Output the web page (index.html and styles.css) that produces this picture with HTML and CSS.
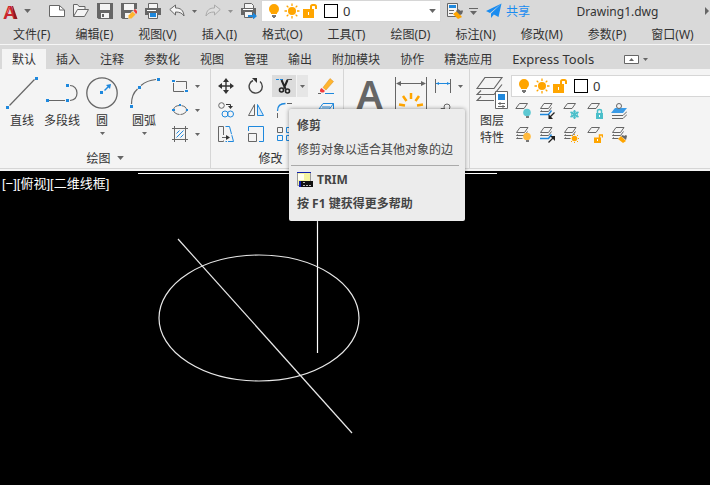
FILE: index.html
```
<!DOCTYPE html>
<html lang="zh-CN">
<head>
  <meta charset="UTF-8" />
  <meta name="viewport" content="width=device-width, initial-scale=1.0"/>
  <title>Drawing1.dwg</title>
  <link rel="stylesheet" href="styles.css">
</head>
<body>
  <!-- shared icons -->
  <svg class="defs" aria-hidden="true">
    <symbol id="bulb" viewBox="0 0 16 16">
      <path fill="#ffa500" d="M8 1a5 5 0 0 0-5 5c0 2 1 3 2 4.200V11h6v-.8C12 9 13 8 13 6a5 5 0 0 0-5-5z"/>
      <path fill="#777" d="M6 12h4v2H9v1H7v-1H6z"/>
    </symbol>
    <symbol id="sun" viewBox="0 0 16 16">
      <circle cx="8" cy="8" r="4" fill="#ffa500"/>
      <path stroke="#ffa500" stroke-width="1.300" d="M8 .5v2.500M8 13v2.500M.5 8H3M13 8h2.500M2.700 2.700l1.700 1.700M11.600 11.600l1.700 1.700M2.700 13.300l1.700-1.700M11.600 4.400l1.700-1.700"/>
    </symbol>
    <symbol id="lock" viewBox="0 0 16 16">
      <path fill="none" stroke="#ffa500" stroke-width="2" d="M9 7V3.500C9 2.500 9.500 2 10.500 2h2c1 0 1.500.5 1.500 1.500V6"/>
      <path fill="#ffa500" d="M1 6h11v9H1z"/>
      <path fill="#fff" d="M6 9h1v3H6z"/>
    </symbol>
    <symbol id="layer" viewBox="0 0 16 16">
      <path fill="#f4f4f4" stroke="#666" d="M.8 5.500L4.500.5h8L9 5.500z"/>
    </symbol>
    <symbol id="layers" viewBox="0 0 16 16">
      <path fill="none" stroke="#666" d="M1.500 5.500L5 .5h8L9.500 5.500zM3 7.500l-1.500 1h8l3-4M3 10.500l-1.500 1h6"/>
    </symbol>
    <symbol id="layers-blue" viewBox="0 0 16 16">
      <path fill="none" stroke="#1e88dd" stroke-width="1.500" d="M1 11.500h8.500l3-4"/>
      <path fill="none" stroke="#666" d="M1.500 5.500L5 .5h8L9.500 5.500zM3 7.500l-1.500 1h8l3-4"/>
    </symbol>
    <symbol id="caret" viewBox="0 0 5 3">
      <path fill="#666" d="M0 0h5L2.500 3z"/>
    </symbol>
  </svg>

  <header class="titlebar">
    <button class="app-btn" aria-label="AutoCAD">
      <svg class="logo" viewBox="0 0 15 18">
        <text x="0" y="17">A</text>
        <path fill="#8e1a22" d="M9 4h1l4.500 13h-3z"/>
        <path fill="#ef6a6a" d="M6 5h1l-2.500 6H3.500z"/>
      </svg>
      <svg class="caret-lg"><use href="#caret"/></svg>
    </button>
    <div class="quick">
      <button aria-label="新建"><svg class="icon" viewBox="0 0 16 16"><path fill="#fff" stroke="#666" d="M.5 2.500h10l5 4.500v6.500H.5z"/><path fill="none" stroke="#666" d="M10.500 2.500V7h5"/></svg></button>
      <button aria-label="打开"><svg class="icon" viewBox="0 0 16 16"><path fill="#f4f4f4" stroke="#666" d="M.5 13.500v-12h4l1.500 2h6v3M.5 13.500l4-7h11l-4 7z"/></svg></button>
      <button aria-label="保存"><svg class="icon" viewBox="0 0 16 16"><path fill="#666" d="M0 0h16v16H1.500L0 14.500z"/><path fill="#f4f4f4" d="M3 1h10v6H3zM4 10h8v5H4z"/><path fill="#666" d="M5 11h2v3H5z"/></svg></button>
      <button aria-label="另存为"><svg class="icon" viewBox="0 0 16 16"><path fill="#666" d="M0 0h16v16H1.500L0 14.500z"/><path fill="#f4f4f4" d="M3 1h10v6H3zM4 10h8v5H4z"/><path fill="#d9d9d9" d="M7 16l3-7 4-3h2v10z"/><path fill="#ffb52e" d="M7.500 12.500l4-4 3 3-4 4H7.500z"/><path fill="#f23c3c" d="M12.500 7.500L14 6l2 2v2l-1 1z"/></svg></button>
      <button aria-label="打印"><svg class="icon" viewBox="0 0 16 16"><path fill="#f4f4f4" stroke="#666" d="M3.500 5.500v-5h9v5"/><path fill="#666" d="M0 5h16v7h-3v-2H3v2H0z"/><path fill="#f4f4f4" stroke="#666" d="M3.500 9.500h9v6h-9z"/><path fill="#1e88dd" d="M5 10h6v4H5z"/><path fill="#fff" d="M2 7h9v1H2z"/></svg></button>
      <button aria-label="放弃"><svg class="icon" viewBox="0 0 16 16"><path fill="#f4f4f4" stroke="#666" d="M.8 6.500L6.500 2v3c5 0 8 2 8.500 8-2-3-4-4-8.500-4v3z"/></svg></button>
      <button class="drop" aria-label="放弃列表"><svg class="caret"><use href="#caret"/></svg></button>
      <button aria-label="重做" disabled><svg class="icon" viewBox="0 0 16 16"><path fill="#dedede" stroke="#aaa" d="M15.200 6.500L9.500 2v3c-5 0-8 2-8.500 8 2-3 4-4 8.500-4v3z"/></svg></button>
      <button class="drop faded" aria-label="重做列表"><svg class="caret"><use href="#caret"/></svg></button>
      <button aria-label="批处理打印"><svg class="icon" viewBox="0 0 16 16"><path fill="#f4f4f4" stroke="#666" d="M3.500 5.500v-5h7l2 2v3"/><path fill="#666" d="M0 5h15v7h-3v-2H3v2H0z"/><path fill="#f4f4f4" stroke="#666" d="M3.500 8.500h8v6h-8z"/><path fill="#fff" d="M2 6h10v1H2z"/><path fill="#1e88dd" d="M7 12h5V9.500l4 3.500-4 3.500V14H7z"/></svg></button>
    </div>
    <div class="combo quick-layer">
      <svg class="icon"><use href="#bulb"/></svg>
      <svg class="icon"><use href="#sun"/></svg>
      <svg class="icon"><use href="#lock"/></svg>
      <span class="swatch"></span>
      <select aria-label="当前图层"><option>0</option></select>
      <svg class="caret-lg"><use href="#caret"/></svg>
    </div>
    <button class="match" aria-label="特性匹配"><svg class="icon" viewBox="0 0 16 16"><path fill="#f4f4f4" stroke="#666" d="M.5.5h10v13H.5z"/><path fill="#1e88dd" d="M2 2h7v3H2z"/><path stroke="#666" d="M2 7.500h5M2 10.500h4"/><path fill="#ffa500" d="M6 11l4-3 5 6-4 2z"/><path fill="#666" d="M9 8l2-2 3 2 1-1 1 1-1 3-2 1z"/></svg></button>
    <button class="custom" aria-label="自定义"><svg viewBox="0 0 9 7"><path fill="#666" d="M0 0h9v1H0zM1 3h7L4.500 7z"/></svg></button>
    <button class="share"><svg class="icon" viewBox="0 0 16 16"><path fill="#1a8cf0" d="M15.500.5L0 8l4 2zM15.500.5L5 10.500V15l2.500-3zM15.500.5L7 11l5.500 3z"/></svg>共享</button>
    <div class="doc-name">Drawing1.dwg</div>
    <button class="more" aria-label="更多"><svg viewBox="0 0 4 8"><path fill="#666" d="M0 0l4 4-4 4z"/></svg></button>
  </header>

  <nav class="menubar">
    <a href="#">文件(F)</a>
    <a href="#">编辑(E)</a>
    <a href="#">视图(V)</a>
    <a href="#">插入(I)</a>
    <a href="#">格式(O)</a>
    <a href="#">工具(T)</a>
    <a href="#">绘图(D)</a>
    <a href="#">标注(N)</a>
    <a href="#">修改(M)</a>
    <a href="#">参数(P)</a>
    <a href="#">窗口(W)</a>
  </nav>

  <nav class="tabs">
    <a class="active" href="#">默认</a>
    <a href="#">插入</a>
    <a href="#">注释</a>
    <a href="#">参数化</a>
    <a href="#">视图</a>
    <a href="#">管理</a>
    <a href="#">输出</a>
    <a href="#">附加模块</a>
    <a href="#">协作</a>
    <a href="#">精选应用</a>
    <a class="latin" href="#">Express Tools</a>
    <button class="minimize" aria-label="最小化功能区">
      <svg class="mini-box" viewBox="0 0 15 9"><path fill="#fff" stroke="#666" d="M.5.5h14v8H.5z"/><path fill="#666" d="M5 6h5L7.500 3z"/></svg>
      <svg class="caret"><use href="#caret"/></svg>
    </button>
  </nav>

  <section class="ribbon">
    <div class="panel">
      <div class="panel-body">
        <button class="big">
          <svg viewBox="0 0 32 32"><path stroke="#666" stroke-width="1.200" d="M3.500 28.500l25-26"/><path fill="#1e88dd" d="M0 29h3v3H0zM29 0h3v3h-3z"/></svg>
          <span>直线</span>
        </button>
        <button class="big wide">
          <svg viewBox="0 0 32 32"><path fill="none" stroke="#666" stroke-width="1.200" d="M3 23.500h16M24 23.500c4-.5 7-3 7-7.500s-3-7.500-7-7.500"/><path fill="#1e88dd" d="M0 22h3v3H0zM20 22h3v3h-3zM20 7h3v3h-3z"/></svg>
          <span>多段线</span>
        </button>
        <button class="big">
          <svg viewBox="0 0 32 32"><circle cx="16" cy="16" r="15.200" fill="none" stroke="#666" stroke-width="1.300"/><path fill="#1e88dd" d="M14 14h3v3h-3zM25 7l-1 5-4-4z"/><path stroke="#1e88dd" stroke-width="1.400" d="M18.500 13.500l5-5"/></svg>
          <span>圆</span>
          <svg class="caret"><use href="#caret"/></svg>
        </button>
        <button class="big arc">
          <svg viewBox="0 0 32 32"><path fill="none" stroke="#666" stroke-width="1.200" d="M3.500 27c0-6 2-11.500 6-15M13 8.500c4-3.500 9-5.500 15-6"/><path fill="#1e88dd" d="M2 28h3v3H2zM10 9h3v3h-3zM29 1h3v3h-3z"/></svg>
          <span>圆弧</span>
          <svg class="caret"><use href="#caret"/></svg>
        </button>
        <div class="small-col">
          <button aria-label="矩形"><svg class="icon" viewBox="0 0 16 16"><path fill="none" stroke="#666" d="M4 3.500h10.500V11M1.500 5v8.500H12"/><path fill="#1e88dd" d="M0 2h3v2H0zM13 12h3v2h-3z"/></svg><svg class="caret"><use href="#caret"/></svg></button>
          <button aria-label="椭圆"><svg class="icon" viewBox="0 0 16 16"><ellipse cx="8" cy="8" rx="6.500" ry="4.500" fill="none" stroke="#666" stroke-dasharray="8 1"/><path fill="#1e88dd" d="M7 2h2v2H7zM0 7h3v2H0zM14 7h2v2h-2z"/></svg><svg class="caret"><use href="#caret"/></svg></button>
          <button aria-label="图案填充"><svg class="icon" viewBox="0 0 16 16"><path stroke="#1e88dd" d="M4.500 7.500l3-3M4.500 11.500l7-7M8.500 11.500l3-3"/><path fill="none" stroke="#666" d="M0 2.500h16M0 13.500h16M2.500 0v16M13.500 0v16"/></svg><svg class="caret"><use href="#caret"/></svg></button>
        </div>
      </div>
      <div class="panel-title">绘图<svg class="caret-lg"><use href="#caret"/></svg></div>
    </div>

    <div class="panel">
      <div class="modify-grid">
        <button aria-label="移动"><svg class="icon" viewBox="0 0 16 16"><path stroke="#333" stroke-width="1.400" d="M8 2v12M2 8h12"/><path fill="#333" d="M8 0l3 4H5zM8 16l3-4H5zM0 8l4-3v6zM16 8l-4-3v6z"/></svg></button>
        <button aria-label="旋转"><svg class="icon" viewBox="0 0 16 16"><path fill="none" stroke="#444" stroke-width="1.400" d="M5 2.500A6.600 6.600 0 1 0 12 3.500"/><path fill="#333" d="M4 0h5v5z"/></svg></button>
        <div class="split">
          <button class="trim" aria-label="修剪" aria-describedby="trim-tip"><svg class="icon" viewBox="0 0 16 16"><path stroke="#1e88dd" stroke-dasharray="3 1" d="M0 1.500h8"/><path stroke="#555" d="M11 1.500h5"/><path stroke="#222" stroke-width="2" d="M5.500 2l4 9M11.500 2L8 10"/><circle cx="5.500" cy="12" r="2" fill="none" stroke="#222" stroke-width="1.600"/><circle cx="11.500" cy="13" r="2" fill="none" stroke="#222" stroke-width="1.600"/></svg></button>
          <button class="trim-drop" aria-label="修剪列表"><svg class="caret"><use href="#caret"/></svg></button>
          <div class="tooltip" id="trim-tip" role="tooltip">
            <strong>修剪</strong>
            <p>修剪对象以适合其他对象的边</p>
            <hr>
            <strong class="command"><svg class="icon" viewBox="0 0 16 16"><path fill="#f4f4a0" stroke="#999" d="M.5.5h13v13H.5z"/><path fill="#fffff0" d="M1 2h6v6H1z"/><path fill="#1020b0" d="M0 0h14v1H0zM2 9h3v6H2z"/><path fill="#111" d="M4 9h12v6H4z"/><path stroke="#bbb" stroke-dasharray="2 1" d="M6 10.500h3M6 13.500h8"/></svg>TRIM</strong>
            <strong>按 F1 键获得更多帮助</strong>
          </div>
        </div>
        <button aria-label="删除"><svg class="icon" viewBox="0 0 16 16"><path fill="#ffb52e" stroke="#d98f20" stroke-width=".5" d="M5 9.500l7-9 3.500 3L8 12z"/><path fill="#f23c3c" d="M2 11.500L3.500 10l3.500 3-1.500 1.500h-2L2 13.500z"/><path stroke="#1e88dd" d="M7 15.500h9"/><path stroke="#666" d="M0 15.500h3"/></svg></button>

        <button aria-label="复制"><svg class="icon" viewBox="0 0 16 16"><g fill="none"><circle cx="3.500" cy="3.500" r="2.800" stroke="#666"/><circle cx="7" cy="12" r="3" stroke="#1e88dd"/><circle cx="12.500" cy="12" r="3" stroke="#1e88dd"/><path stroke="#333" d="M8 2.500h4.500V4"/></g><path fill="#333" d="M10 4h5l-2.500 3z"/></svg></button>
        <button aria-label="镜像"><svg class="icon" viewBox="0 0 16 16"><path fill="none" stroke="#666" d="M6.500 2.500v11h-6z"/><path fill="#d6eafa" stroke="#1e88dd" d="M9.500 2.500v11h6z"/></svg></button>
        <button class="left" aria-label="圆角"><svg class="icon" viewBox="0 0 16 16"><path fill="none" stroke="#1e88dd" stroke-width="1.300" d="M1.500 9c0-5 3-7.500 8-7.500"/><path stroke="#666" d="M1.500 11v5M11 1.500h5"/></svg></button>
        <button aria-label="分解"><svg class="icon" viewBox="0 0 16 16"><path fill="none" stroke="#1e88dd" d="M1 7L5 1.500h10.500L11.500 7zM4 5h8M15.500 1.500v6l-4 5M1 9.500h10v5H1z"/></svg></button>

        <button aria-label="拉伸"><svg class="icon" viewBox="0 0 16 16"><path fill="none" stroke="#666" d="M5.500 9V.5h-5v15h5v-1M4 11.500h5"/><path fill="#333" d="M8 9l4 2.500L8 14z"/><path fill="none" stroke="#1e88dd" d="M7.500.5h4l4 15h-8" stroke-dasharray="12 1"/></svg></button>
        <button aria-label="缩放"><svg class="icon" viewBox="0 0 16 16"><path fill="none" stroke="#1e88dd" d="M.5 5V.5h15v15H11"/><path fill="none" stroke="#666" d="M.5 7.500h8v8h-8z"/></svg></button>
        <button class="left" aria-label="阵列"><svg class="icon" viewBox="0 0 16 16"><g fill="none"><path stroke="#666" d="M1.500 1.500h5v5h-5z"/><path stroke="#1e88dd" d="M10.500 1.500h5v5h-5zM1.500 9.500h5v5h-5zM10.500 9.500h5v5h-5z"/></g></svg></button>
      </div>
      <div class="panel-title">修改<svg class="caret-lg"><use href="#caret"/></svg></div>
    </div>

    <div class="panel">
      <div class="panel-body">
        <button class="text-tool">A</button>
        <button class="big dim" aria-label="标注">
          <svg viewBox="0 0 32 32"><path fill="none" stroke="#666" d="M.5 0v32M31.500 0v32M2 6.500h28"/><path fill="#666" d="M1 6.500l5-2.500v5zM31 6.500L26 4v5z"/><path stroke="#ffa500" stroke-width="2.500" d="M16 16v6M8 19l3.500 5M24 19l-3.500 5M4 27.500l6 1M28 27.500l-6 1"/></svg>
        </button>
        <div class="small-col">
          <button aria-label="线性"><svg class="icon" viewBox="0 0 16 16"><path stroke="#666" d="M.5 1v14M15.500 1v14"/><path stroke="#1e88dd" d="M1 5.500h14"/><path fill="#1e88dd" d="M1 5.500L4 4v3zM15 5.500L12 4v3z"/></svg><svg class="caret"><use href="#caret"/></svg></button>
          <button aria-label="引线"><svg class="icon" viewBox="0 0 16 16"><circle cx="12" cy="5" r="3" fill="none" stroke="#666"/><path fill="none" stroke="#666" d="M9 6.500H6L3 14"/></svg></button>
        </div>
      </div>
      <div class="panel-title"></div>
    </div>

    <div class="panel layers">
      <div class="panel-body">
        <button class="big wide">
          <svg viewBox="0 0 32 32"><path fill="none" stroke="#666" stroke-width="1.200" d="M1 11.500L9 .5h17l-8 11zM5 13.500l-4 4h17l8-10M5 19.500l-4 4h17"/><path fill="#fff" stroke="#666" d="M19.500 14.500h12v17h-12z"/><path fill="#1e88dd" d="M22 17h7v6h-7z"/><path stroke="#666" d="M22 26.500h7M22 29.500h7M24 25v3M27 28v3"/></svg>
          <span>图层<br>特性</span>
        </button>
        <div class="layer-tools">
          <div class="combo">
            <svg class="icon"><use href="#bulb"/></svg>
            <svg class="icon"><use href="#sun"/></svg>
            <svg class="icon"><use href="#lock"/></svg>
            <span class="swatch"></span>
            <select aria-label="图层"><option>0</option></select>
          </div>
          <div class="icon-row">
            <button aria-label="关"><svg class="icon" viewBox="0 0 16 16"><use href="#layer"/><circle cx="12" cy="9.500" r="3.800" fill="#5cc8d2"/><path fill="#777" d="M11 13h3v2h-3z"/></svg></button>
            <button aria-label="隔离"><svg class="icon" viewBox="0 0 16 16"><use href="#layers-blue"/><path stroke="#222" stroke-width="1.300" d="M15.500 9.500L11 14"/><path fill="#222" d="M9.500 16v-5l4.500 5z"/></svg></button>
            <button aria-label="冻结"><svg class="icon" viewBox="0 0 16 16"><use href="#layer"/><path stroke="#4bbfca" stroke-width="1.600" d="M11.500 7v9M7.500 9l8 5M7.500 14l8-5"/><circle cx="11.500" cy="11.500" r="3" fill="none" stroke="#4bbfca"/></svg></button>
            <button aria-label="锁定"><svg class="icon" viewBox="0 0 16 16"><use href="#layer"/><path fill="none" stroke="#4bbfca" stroke-width="1.500" d="M10.500 10V8c0-2 4-2 4 0v2"/><path fill="#4bbfca" d="M9 10h7v6H9z"/><path fill="#fff" d="M12 12h1v2h-1z"/></svg></button>
            <button aria-label="置为当前"><svg class="icon" viewBox="0 0 16 16"><path fill="#3a9be6" d="M0 10l4-5h12l-4 5z"/><path fill="none" stroke="#666" d="M1 12.500h11l4-4M1 15.500h11l4-4"/><circle cx="8" cy="3" r="2.500" fill="#f4f4f4" stroke="#666"/></svg></button>
          </div>
          <div class="icon-row">
            <button aria-label="打开所有图层"><svg class="icon" viewBox="0 0 16 16"><use href="#layers"/><circle cx="12" cy="9.500" r="3.800" fill="#ffb93b"/><path fill="#777" d="M11 13h3v2h-3z"/></svg></button>
            <button aria-label="取消隔离"><svg class="icon" viewBox="0 0 16 16"><use href="#layers-blue"/><path stroke="#222" stroke-width="1.300" d="M9.500 15.500l5-5"/><path fill="#222" d="M16 9v5l-5-5z"/></svg></button>
            <button aria-label="解冻"><svg class="icon" viewBox="0 0 16 16"><use href="#layers"/><circle cx="11.500" cy="11.500" r="2.800" fill="#ffa500"/><path stroke="#ffa500" d="M11.500 7v1M11.500 15v1M7 11.500h1M15 11.500h1M8 8l1 1M14 14l1 1M8 15l1-1M14 9l1-1"/></svg></button>
            <button aria-label="解锁"><svg class="icon" viewBox="0 0 16 16"><use href="#layer"/><path fill="none" stroke="#ffa500" stroke-width="1.500" d="M12.500 11V8h3v2.500"/><path fill="#ffa500" d="M7 10.500h7V16H7z"/><path fill="#fff" d="M10 12h1v2h-1z"/></svg></button>
            <button aria-label="匹配图层"><svg class="icon" viewBox="0 0 16 16"><use href="#layers"/><path fill="#ffa500" d="M7 12l3-3 5 5-3 2z"/><path fill="#666" d="M10 9l2-1 1 1 2-1 1 1-1 4z"/></svg></button>
          </div>
        </div>
      </div>
      <div class="panel-title"></div>
    </div>
  </section>

  <main class="viewport">
    <div class="view-label">[−][俯视][二维线框]</div>
    <svg class="drawing" fill="none" stroke="#e8e8e8" stroke-width="1.200">
      <path stroke="#fff" d="M138 2.500h359M317.500 2v180"/>
      <ellipse cx="259" cy="147" rx="100" ry="63"/>
      <path d="M178 68l174 194"/>
    </svg>
  </main>
</body>
</html>
```

FILE: styles.css
```
:root {
  --bar: #d9d9d9;
  --ribbon: #f4f4f4;
  --line: #d6d6d6;
  --text: #333;
}
* {
  box-sizing: border-box;
}
body {
  margin: 0;
  min-height: 100vh;
  display: flex;
  flex-direction: column;
  font-family: "Noto Sans", "Noto Sans CJK SC", sans-serif;
  font-size: 12px;
  color: var(--text);
  background: #000;
  overflow: hidden;
}
button, select {
  font: inherit;
  color: inherit;
  background: none;
  border: none;
  padding: 0;
  margin: 0;
}
button {
  display: flex;
  align-items: center;
  justify-content: center;
  cursor: pointer;
}
a {
  color: inherit;
  text-decoration: none;
}
svg {
  display: block;
  flex: none;
}
.defs {
  position: absolute;
  width: 0;
  height: 0;
}
.icon {
  width: 16px;
  height: 16px;
}
.caret {
  width: 5px;
  height: 3px;
}
.caret-lg {
  width: 7px;
  height: 4px;
}

/* title bar */
.titlebar {
  display: flex;
  align-items: center;
  height: 22px;
  background: var(--bar);
}
.app-btn {
  gap: 6px;
  margin-left: 3px;
}
.logo {
  width: 15px;
  height: 18px;
  overflow: visible;
}
.logo text {
  font-family: "Liberation Sans", sans-serif;
  font-size: 19px;
  font-weight: bold;
  fill: #c9252d;
}
.quick {
  display: flex;
  margin-left: 18px;
  gap: 8px;
}
.quick .drop {
  width: 5px;
  margin-left: -1px;
}
.faded {
  opacity: 0.6;
}
.combo {
  display: flex;
  align-items: center;
  gap: 2px;
  height: 22px;
  padding: 0 4px;
  background: #fff;
  border: 1px solid var(--line);
}
.swatch {
  width: 14px;
  height: 14px;
  margin: 0 3px 0 4px;
  border: 1px solid #000;
  flex: none;
}
.combo select {
  flex: 1;
  min-width: 0;
  appearance: none;
  font-size: 13px;
}
.quick-layer {
  width: 180px;
  margin-left: 4px;
  flex: none;
}
.match {
  margin-left: 6px;
}
.custom {
  margin-left: 6px;
}
.custom svg {
  width: 9px;
  height: 7px;
}
.share {
  margin-left: 8px;
  gap: 4px;
  color: #1a8cf0;
}
.doc-name {
  flex: 1;
  text-align: center;
  white-space: nowrap;
}
.more svg {
  width: 4px;
  height: 8px;
}
.more {
  margin-right: 1px;
}

/* menus and tabs */
.menubar {
  display: flex;
  gap: 25px;
  height: 23px;
  padding-left: 13px;
  line-height: 25px;
  white-space: nowrap;
  background: var(--bar);
  border-bottom: 1px solid #f6f6f6;
}
.tabs {
  display: flex;
  height: 24px;
  padding: 4px 0 0 2px;
  line-height: 21px;
  white-space: nowrap;
  background: var(--bar);
}
.tabs a {
  padding: 0 10px;
}
.tabs .active {
  background: var(--ribbon);
}
.tabs .latin {
  font-size: 13px;
}
.minimize {
  gap: 4px;
  margin-left: 20px;
}
.mini-box {
  width: 15px;
  height: 9px;
}

/* ribbon */
.ribbon {
  display: flex;
  height: 102px;
  padding-bottom: 2px;
  background: var(--ribbon);
}
.panel {
  display: flex;
  flex-direction: column;
  flex: none;
  padding-top: 5px;
  border-right: 1px solid var(--line);
  border-bottom: 1px solid var(--line);
}
.panel-body {
  display: flex;
  height: 72px;
}
.panel-title {
  display: flex;
  flex: 1;
  align-items: center;
  justify-content: center;
  gap: 6px;
  padding-top: 2px;
}
.panel:first-child .panel-body {
  padding: 0 5px 0 4px;
}
.big {
  flex-direction: column;
  justify-content: flex-start;
  width: 36px;
  padding-top: 3px;
}
.big > svg:first-child {
  width: 32px;
  height: 32px;
}
.big span {
  margin: 3px 0;
  line-height: 17px;
}
.big.wide {
  width: 44px;
}
.big.arc {
  width: 48px;
}
.small-col {
  display: flex;
  flex-direction: column;
  margin-left: 4px;
}
.small-col button {
  height: 24px;
  gap: 7px;
  padding-right: 5px;
  justify-content: flex-start;
}
.modify-grid {
  display: grid;
  grid-template-columns: 30px 30px 38px 34px;
  grid-template-rows: repeat(3, 24px);
}
.modify-grid .left {
  justify-content: flex-start;
  padding-left: 5px;
}
.split {
  position: relative;
  display: flex;
  gap: 1px;
  padding: 1px;
}
.trim {
  width: 24px;
  background: #dcdcdc;
}
.trim-drop {
  width: 11px;
  background: #e6e6e6;
}
.text-tool {
  width: 51px;
  align-items: flex-start;
  font-size: 39px;
  font-weight: 600;
  line-height: 40px;
  color: #666;
}
.big.dim {
  width: 32px;
}
.dim + .small-col {
  margin-left: 8px;
}
.dim + .small-col button {
  padding-right: 6px;
}
.layers {
  flex: 1;
  min-width: 0;
  border-right: none;
}
.layer-tools {
  flex: 1;
  min-width: 0;
  margin-left: -3px;
  padding-top: 1px;
}
.layer-tools .combo {
  border-right: none;
}
.icon-row {
  display: flex;
  gap: 8px;
  height: 24px;
  padding: 4px 0 0 4px;
}

/* tooltip */
.tooltip {
  position: absolute;
  z-index: 1;
  top: 35px;
  left: 18px;
  width: 176px;
  height: 112px;
  padding: 5px 6px 5px 8px;
  line-height: 24px;
  white-space: nowrap;
  color: #444;
  background: #ececec;
  border-radius: 2px;
  box-shadow: 0 0 4px rgba(0,0,0,0.4);
}
.tooltip strong {
  display: block;
}
.tooltip p {
  margin: 0;
}
.tooltip hr {
  margin: 3px 0 2px -6px;
  border: none;
  border-top: 1px solid #aaa;
}
.tooltip .command {
  display: flex;
  align-items: center;
  gap: 4px;
}

/* drawing area */
.viewport {
  position: relative;
  display: flex;
  flex: 1;
  background: #000;
}
.view-label {
  position: absolute;
  top: 4px;
  left: 2px;
  font-family: "Liberation Sans", "Noto Sans CJK SC", sans-serif;
  font-size: 13px;
  line-height: 18px;
  color: #fff;
}
.drawing {
  flex: 1;
  min-height: 314px;
}
```
